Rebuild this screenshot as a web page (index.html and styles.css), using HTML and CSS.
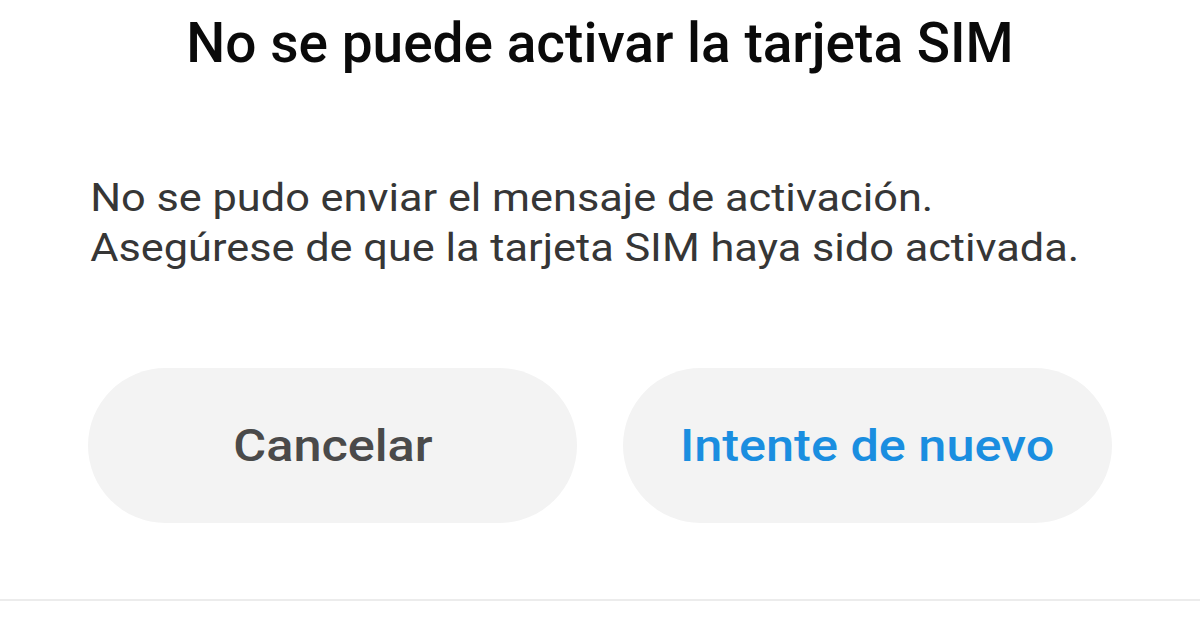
FILE: index.html
```html
<!DOCTYPE html>
<html lang="es">
<head>
  <meta charset="UTF-8">
  <meta name="viewport" content="width=device-width, initial-scale=1.0">
  <title>No se puede activar la tarjeta SIM</title>
  <link rel="stylesheet" href="styles.css">
</head>
<body>
  <div class="dialog">
    <h1 class="dialog_title">No se puede activar la tarjeta SIM</h1>
    <p class="dialog_msg">
      No se pudo enviar el mensaje de activación.<br>
      Asegúrese de que la tarjeta SIM haya sido activada.
    </p>
    <div class="dialog_btns">
      <button class="btn btn_cancel"><span>Cancelar</span></button>
      <button class="btn btn_retry"><span>Intente de nuevo</span></button>
    </div>
  </div>
  <div class="divider"></div>
</body>
</html>
```

FILE: styles.css
```css
body {
  margin: 0;
  background: #fff;
  font-family: Roboto, "Noto Sans", sans-serif;
}
.dialog {
  padding: 0 88px;
  height: 599px;
}
.dialog_title {
  margin: 0;
  padding-top: 13px;
  font-size: 55px;
  font-weight: 500;
  line-height: 60px;
  color: #0a0a0a;
  text-align: center;
}
.dialog_msg {
  margin: 0;
  padding-top: 100px;
  padding-left: 2px;
  font-size: 39px;
  line-height: 50px;
  color: #363636;
  transform: scaleX(1.11);
  transform-origin: left top;
}
.dialog_btns {
  display: flex;
  gap: 46px;
  margin-top: 95px;
}
.btn {
  flex: 1;
  height: 155px;
  border: none;
  border-radius: 78px;
  background: #f3f3f3;
  font-family: Roboto, "Noto Sans", sans-serif;
  font-size: 45px;
  font-weight: 500;
}
.btn span {
  display: inline-block;
  transform: scaleX(1.12);
}
.btn_cancel {
  color: #4a4a4a;
}
.btn_retry {
  color: #1a8ee0;
}
.divider {
  height: 2px;
  background: #ececec;
}
```
